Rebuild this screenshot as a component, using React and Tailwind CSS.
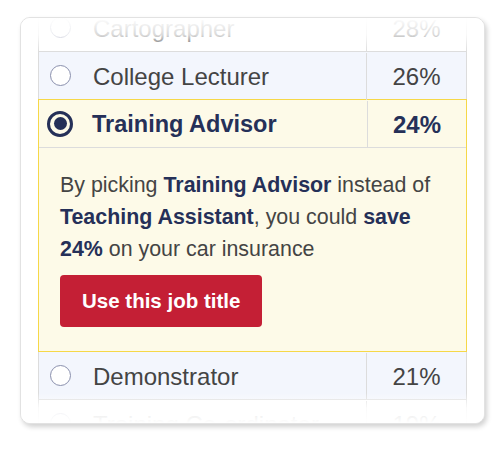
import React from "react";

const font = { fontFamily: '"Liberation Sans", Arial, sans-serif' };

function Radio({ selected }) {
  if (selected) {
    return (
      <div className="w-[26px] h-[26px] -ml-[3px] rounded-full border-[3px] border-[#253058] flex items-center justify-center shrink-0">
        <div className="w-[13px] h-[13px] rounded-full bg-[#253058]" />
      </div>
    );
  }
  return <div className="w-[21px] h-[21px] rounded-full border-[1.5px] border-[#8a90ad] bg-white shrink-0" />;
}

function Row({ name, pct, bg = "bg-white", border = true }) {
  return (
    <div className={`flex h-[48px] ${bg} border-x border-[#dcdcdc] ${border ? "border-b" : ""}`}>
      <div className="flex-1 flex items-center pl-[11px] gap-[22px]">
        <Radio />
        <span className="text-[24px] text-[#444444] translate-y-[1px]">{name}</span>
      </div>
      <div className="w-[100px] border-l border-[#dcdcdc] flex items-center justify-center text-[24px] text-[#444444] translate-y-[1px]">
        {pct}
      </div>
    </div>
  );
}

export default function App() {
  return (
    <div className="w-[495px] h-[450px] bg-white pt-[17px] pl-[20px]" style={font}>
      <div className="relative w-[465px] h-[407px] overflow-hidden rounded-[10px] border border-[#e2e2e2] bg-white shadow-[2px_3px_5px_rgba(0,0,0,0.18)]">
        <div className="mx-[17px] -mt-[14px]">
          <Row name="Cartographer" pct="28%" />
          <div className="flex h-[47px] bg-[#f3f6fd] border-x border-[#dcdcdc]">
            <div className="flex-1 flex items-center pl-[11px] gap-[22px]">
              <Radio />
              <span className="text-[24px] text-[#444444] translate-y-[1px]">College Lecturer</span>
            </div>
            <div className="w-[100px] border-l border-[#dcdcdc] flex items-center justify-center text-[24px] text-[#444444] translate-y-[1px]">
              26%
            </div>
          </div>
          <div className="border border-[#f6d848] bg-[#fdfae8]">
            <div className="flex h-[48px] border-b border-[#dcdcdc]">
              <div className="flex-1 flex items-center pl-[11px] gap-[22px]">
                <Radio selected />
                <span className="text-[23.5px] font-bold text-[#253058] -ml-[3px] translate-y-[1px]">Training Advisor</span>
              </div>
              <div className="w-[99px] border-l border-[#dcdcdc] flex items-center justify-center text-[24px] font-bold text-[#253058] translate-y-[1px]">
                24%
              </div>
            </div>
            <div className="pt-[21px] pb-[24px] pl-[21px] pr-[20px]">
              <p className="text-[21.4px] leading-[32px] text-[#444444]">
                By picking <b className="text-[#253058]">Training Advisor</b> instead of{" "}
                <b className="text-[#253058]">Teaching Assistant</b>, you could{" "}
                <b className="text-[#253058]">save 24%</b> on your car insurance
              </p>
              <button className="mt-[10px] h-[52px] px-[22px] rounded-[4px] bg-[#c41f35] text-white text-[20.5px] font-bold">
                Use this job title
              </button>
            </div>
          </div>
          <div className="flex h-[48px] bg-[#f3f6fd] border-x border-b border-[#dcdcdc]">
            <div className="flex-1 flex items-center pl-[11px] gap-[22px]">
              <Radio />
              <span className="text-[24px] text-[#444444] translate-y-[1px]">Demonstrator</span>
            </div>
            <div className="w-[100px] border-l border-[#dcdcdc] flex items-center justify-center text-[24px] text-[#444444] translate-y-[1px]">
              21%
            </div>
          </div>
          <Row name="Training Co-ordinator" pct="19%" />
        </div>
        <div className="absolute left-0 right-0 top-0 h-[34px] bg-gradient-to-b from-white via-white/80 to-white/0" />
        <div className="absolute left-0 right-0 bottom-0 h-[30px] bg-gradient-to-t from-white via-white/85 to-white/0" />
      </div>
    </div>
  );
}
